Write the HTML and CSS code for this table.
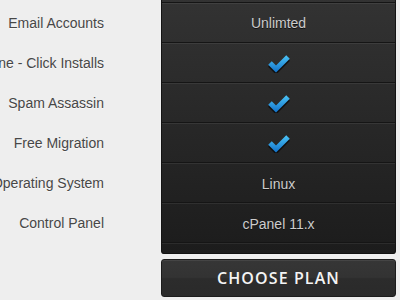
FILE: index.html
```html
<!DOCTYPE html>
<html lang="en">
<head>
  <meta charset="UTF-8" />
  <title>Hosting Plan</title>
  <link rel="stylesheet" href="styles.css">
</head>
<body>
  <div class="pricing">
    <div class="features">
      <div class="feature"></div>
      <div class="feature">Email Accounts</div>
      <div class="feature">One - Click Installs</div>
      <div class="feature">Spam Assassin</div>
      <div class="feature">Free Migration</div>
      <div class="feature">Operating System</div>
      <div class="feature">Control Panel</div>
    </div>

    <div class="plan">
      <div class="plan-table">
        <div class="cell"></div>
        <div class="cell">Unlimted</div>
        <div class="cell">
          <svg class="check" width="24" height="20" viewBox="0 0 24 20">
            <defs>
              <linearGradient id="blue" x1="0" y1="2" x2="0" y2="18" gradientUnits="userSpaceOnUse">
                <stop offset="0" stop-color="#4cc6f7"/>
                <stop offset="1" stop-color="#1677cc"/>
              </linearGradient>
            </defs>
            <path d="M3 10.5 L9 16.5 L21 4.5" fill="none" stroke="#0b0b0b" stroke-opacity="0.8" stroke-width="5.5" transform="translate(0,1.3)"/>
            <path d="M3 10 L9 16 L21 4" fill="none" stroke="url(#blue)" stroke-width="5"/>
          </svg>
        </div>
        <div class="cell">
          <svg class="check" width="24" height="20" viewBox="0 0 24 20">
            <path d="M3 10.5 L9 16.5 L21 4.5" fill="none" stroke="#0b0b0b" stroke-opacity="0.8" stroke-width="5.5" transform="translate(0,1.3)"/>
            <path d="M3 10 L9 16 L21 4" fill="none" stroke="url(#blue)" stroke-width="5"/>
          </svg>
        </div>
        <div class="cell">
          <svg class="check" width="24" height="20" viewBox="0 0 24 20">
            <path d="M3 10.5 L9 16.5 L21 4.5" fill="none" stroke="#0b0b0b" stroke-opacity="0.8" stroke-width="5.5" transform="translate(0,1.3)"/>
            <path d="M3 10 L9 16 L21 4" fill="none" stroke="url(#blue)" stroke-width="5"/>
          </svg>
        </div>
        <div class="cell cell-low">Linux</div>
        <div class="cell cell-low">cPanel 11.x</div>
        <div class="plan-foot"></div>
      </div>
      <button class="btn-choose">CHOOSE PLAN</button>
    </div>
  </div>
</body>
</html>
```

FILE: styles.css
```css
body {
  margin: 0;
  background: #eeeeee;
  font-family: 'Liberation Sans', Arial, sans-serif;
  overflow: hidden;
}

.pricing {
  display: flex;
  margin-top: -37px;
}

.features {
  width: 104px;
  flex-shrink: 0;
}

.feature {
  height: 40px;
  display: flex;
  align-items: center;
  justify-content: flex-end;
  white-space: nowrap;
  font-size: 14px;
  color: #474747;
  text-shadow: 0 1px 0 rgba(255,255,255,0.6);
}

.plan {
  width: 235px;
  margin-left: 57px;
}

.plan-table {
  background: linear-gradient(#363636, #1c1c1c);
  border-left: 1px solid #141414;
  border-right: 1px solid #141414;
  border-radius: 0 0 3px 3px;
}

.cell {
  height: 39px;
  border-bottom: 1px solid #151515;
  box-shadow: inset 0 1px 0 rgba(255,255,255,0.07);
  display: flex;
  align-items: center;
  justify-content: center;
  font-size: 14px;
  color: #cccccc;
  text-shadow: 0 1px 0 #111;
}

.cell-low {
  padding-top: 2px;
  height: 37px;
}

.check {
  display: block;
  margin-top: 1px;
}

.plan-foot {
  height: 10px;
  box-shadow: inset 0 1px 0 rgba(255,255,255,0.07);
  border-bottom: 1px solid #111;
  border-radius: 0 0 3px 3px;
}

.btn-choose {
  display: block;
  width: 235px;
  height: 38px;
  margin-top: 5px;
  border: 1px solid #1c1c1c;
  border-radius: 3px;
  background: linear-gradient(#363636 0%, #333 48%, #2c2c2c 52%, #2a2a2a 100%);
  box-shadow: inset 0 1px 0 rgba(255,255,255,0.08);
  color: #f4f4f4;
  font-family: 'Open Sans', sans-serif;
  font-weight: 600;
  font-size: 16px;
  letter-spacing: 1.1px;
  cursor: pointer;
  padding: 0;
}
```
